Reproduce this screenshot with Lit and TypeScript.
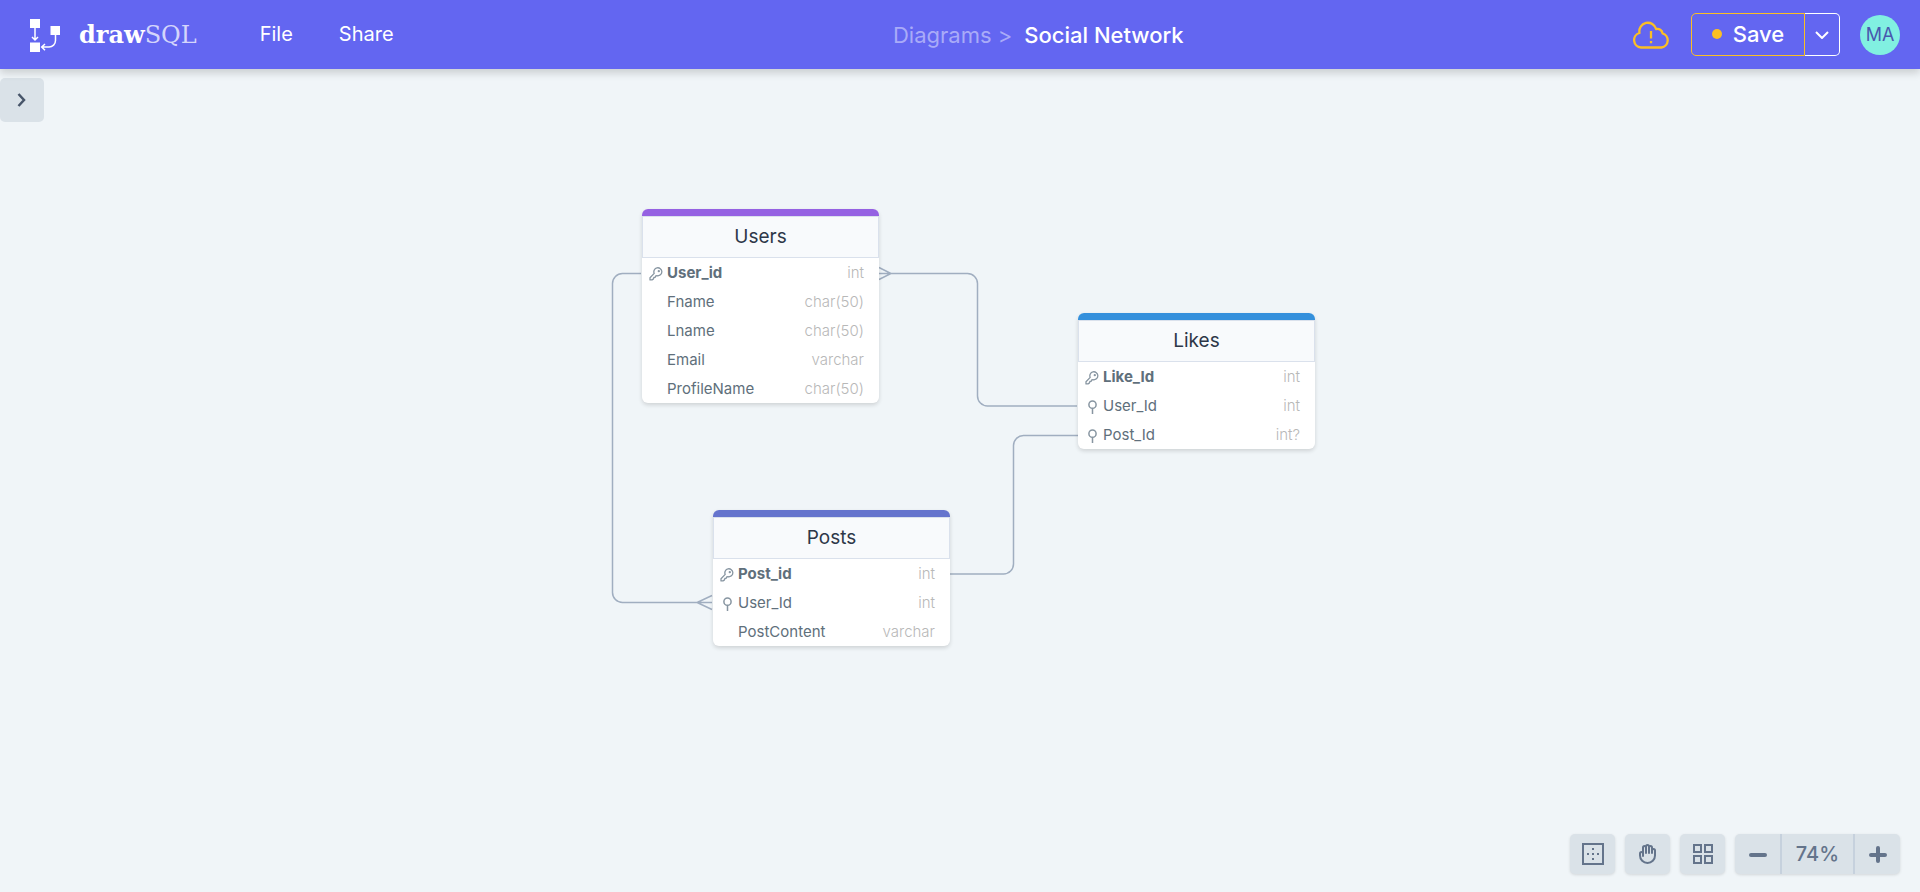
import { LitElement, html, svg, css, nothing } from "lit";
import { customElement, property } from "lit/decorators.js";

type KeyKind = "primary" | "index" | "none";

interface Field {
  name: string;
  type: string;
  key: KeyKind;
}

interface Entity {
  id: string;
  title: string;
  color: string;
  x: number;
  y: number;
  fields: Field[];
}

const ENTITIES: Entity[] = [
  {
    id: "users",
    title: "Users",
    color: "#9561e2",
    x: 642,
    y: 140,
    fields: [
      { name: "User_id", type: "int", key: "primary" },
      { name: "Fname", type: "char(50)", key: "none" },
      { name: "Lname", type: "char(50)", key: "none" },
      { name: "Email", type: "varchar", key: "none" },
      { name: "ProfileName", type: "char(50)", key: "none" },
    ],
  },
  {
    id: "likes",
    title: "Likes",
    color: "#3490dc",
    x: 1078,
    y: 244,
    fields: [
      { name: "Like_Id", type: "int", key: "primary" },
      { name: "User_Id", type: "int", key: "index" },
      { name: "Post_Id", type: "int?", key: "index" },
    ],
  },
  {
    id: "posts",
    title: "Posts",
    color: "#6574cd",
    x: 713,
    y: 441,
    fields: [
      { name: "Post_id", type: "int", key: "primary" },
      { name: "User_Id", type: "int", key: "index" },
      { name: "PostContent", type: "varchar", key: "none" },
    ],
  },
];

// Relationship lines in canvas coordinates, with crow's feet on the "many" ends.
const LINKS: string[] = [
  "M641 204.5H622.5a10 10 0 0 0-10 10V523.5a10 10 0 0 0 10 10H712M712 526.500L697 533.500L712 540.500",
  "M879 204.5H967.500a10 10 0 0 1 10 10V327a10 10 0 0 0 10 10H1077M879 198.500L891 204.500L879 210.500",
  "M950 505H1003.500a10 10 0 0 0 10-10V376.500a10 10 0 0 1 10-10H1078",
];

const primaryIcon = svg`
  <svg width="14" height="14" viewBox="0 0 14 14" fill="none" stroke="#8795a1" stroke-width="1.300" stroke-linejoin="round">
    <path d="M5.200 6.400A4 4 0 1 1 8.100 8.700L6.700 8.900L6.300 10.200L4.900 10.500L4.500 11.900L3 12.900H1V10.700Z"/>
    <circle cx="9.800" cy="4.200" r=".500" fill="#8795a1"/>
  </svg>`;

const indexIcon = svg`
  <svg width="14" height="14" viewBox="0 0 14 14" fill="none" stroke="#8795a1" stroke-width="1.500">
    <circle cx="7.500" cy="4.700" r="3.600"/>
    <path d="M7.500 8.300V14"/>
  </svg>`;

@customElement("entity-card")
export class EntityCard extends LitElement {
  @property({ attribute: false }) entity!: Entity;

  static styles = css`
    :host {
      display: block;
      width: 237px;
    }
    .card {
      border-radius: 6px;
      background: #fff;
      overflow: hidden;
      box-shadow: 0 2px 4px rgba(0, 0, 0, 0.14);
    }
    .band {
      height: 7px;
    }
    .title {
      margin: 0;
      border: 1px solid #dae1ec;
      background: #f8fafc;
      color: #2d3748;
      font-size: 19px;
      font-weight: 400;
      line-height: 40px;
      text-align: center;
    }
    .fields {
      width: 100%;
      border-collapse: collapse;
      font-size: 15px;
      line-height: 29px;
    }
    .fields td,
    .fields th {
      height: 29px;
      padding: 0;
    }
    .mark {
      width: 25px;
    }
    .mark svg {
      display: block;
      margin: 3px 0 0 7px;
    }
    .name {
      color: #606f7b;
      font-weight: 400;
      text-align: left;
    }
    .primary {
      font-weight: 700;
    }
    .fields .type {
      padding-right: 15px;
      color: #b8b8b8;
      font-weight: 300;
      text-align: right;
    }
  `;

  render() {
    const e = this.entity;
    return html`
      <section class="card" aria-labelledby="title">
        <div class="band" style="background:${e.color}"></div>
        <h2 class="title" id="title">${e.title}</h2>
        <table class="fields" aria-labelledby="title">
          <tbody>
            ${e.fields.map(
              (f) => html`
                <tr>
                  <td class="mark">
                    ${f.key === "primary" ? primaryIcon : f.key === "index" ? indexIcon : nothing}
                  </td>
                  <th scope="row" class="name ${f.key === "primary" ? "primary" : ""}">${f.name}</th>
                  <td class="type">${f.type}</td>
                </tr>
              `
            )}
          </tbody>
        </table>
      </section>
    `;
  }
}

@customElement("app-root")
export class AppRoot extends LitElement {
  static styles = css`
    :host {
      display: flex;
      flex-direction: column;
      min-height: 100vh;
      background: #f0f5f8;
      font-family: Inter, "Liberation Sans", sans-serif;
    }
    button {
      font: inherit;
      margin: 0;
      padding: 0;
      border: 0;
      background: none;
      display: flex;
      align-items: center;
      justify-content: center;
      cursor: pointer;
    }
    a {
      color: inherit;
      text-decoration: none;
    }
    .header {
      position: relative;
      z-index: 1;
      display: flex;
      align-items: center;
      height: 69px;
      padding: 0 20px 0 29px;
      background: #6366f1;
      color: #fff;
      box-shadow: 0 4px 8px rgba(0, 0, 0, 0.16);
    }
    .logo {
      display: flex;
      align-items: center;
      gap: 17px;
      font-family: "DejaVu Serif", serif;
      font-size: 24px;
      line-height: 32px;
    }
    .brand {
      font-weight: 700;
    }
    .brand-light {
      font-weight: 400;
      color: #d4d5fb;
    }
    .menu {
      display: flex;
      gap: 46px;
      margin: 0 50px 0 63px;
      padding-bottom: 2px;
      font-size: 20px;
    }
    .menu button {
      color: #fff;
    }
    .crumbs {
      flex: 1;
      display: flex;
      justify-content: center;
      gap: 12px;
      font-size: 22px;
      line-height: 32px;
      white-space: nowrap;
    }
    .parent {
      color: #a9abf8;
    }
    .current {
      font-weight: 500;
    }
    .actions {
      display: flex;
      align-items: center;
    }
    .cloud {
      margin-right: 22px;
    }
    .save {
      width: 114px;
      height: 43px;
      padding-bottom: 2px;
      gap: 11px;
      border: 1px solid #fbbf24;
      border-radius: 5px 0 0 5px;
      color: #fff;
      font-size: 22px;
      font-weight: 500;
    }
    .dot {
      width: 10px;
      height: 10px;
      border-radius: 50%;
      background: #fbbf24;
    }
    .more {
      width: 35px;
      height: 43px;
      border: 1px solid #fff;
      border-left: 0;
      border-radius: 0 5px 5px 0;
    }
    .avatar {
      width: 40px;
      height: 40px;
      margin-left: 20px;
      border-radius: 50%;
      background: #81f0e1;
      color: #4858ae;
      font-size: 18px;
    }
    .canvas {
      position: relative;
      flex: 1;
      overflow: hidden;
    }
    .links {
      position: absolute;
      inset: 0;
      width: 100%;
      height: 100%;
    }
    .node {
      position: absolute;
    }
    .expand {
      position: absolute;
      top: 9px;
      left: 0;
      width: 44px;
      height: 44px;
      border-radius: 5px;
      background: #dae2e8;
    }
    .tools {
      position: absolute;
      right: 20px;
      bottom: 18px;
      display: flex;
      gap: 10px;
    }
    .tool {
      width: 45px;
      height: 40px;
      border-radius: 5px;
      background: #dae2e8;
      box-shadow: 0 1px 3px rgba(0, 0, 0, 0.12);
    }
    .zoom {
      display: flex;
      border-radius: 5px;
      background: #dae2e8;
      box-shadow: 0 1px 3px rgba(0, 0, 0, 0.12);
    }
    .zoom button {
      width: 45px;
      height: 40px;
    }
    .zoom .level {
      width: 75px;
      border: solid #c6d1dd;
      border-width: 0 2px;
      color: #64748b;
      font-size: 20px;
      font-weight: 500;
    }
  `;

  private renderHeader() {
    return html`
      <header class="header">
        <a class="logo" href="#" aria-label="drawSQL">
          <svg width="33" height="36" viewBox="0 0 33 36" fill="none" stroke="#fff" stroke-width="1.500">
            <path d="M1 2h10v9H1zM21.500 9h9.500v9h-9.500zM1 25.500h10v9.500H1z" fill="#fff" stroke="none"/>
            <path d="M6 11v12M3 20l3 3l3-3M26.500 18v5.500a6.500 6.500 0 0 1-6.500 6.500H13M16 27l-3.300 3l3.300 3.200"/>
          </svg>
          <span><span class="brand">draw</span><span class="brand-light">SQL</span></span>
        </a>
        <nav class="menu" aria-label="Main">
          <button type="button">File</button>
          <button type="button">Share</button>
        </nav>
        <nav class="crumbs" aria-label="Breadcrumb">
          <span class="parent"><a href="#">Diagrams</a> &gt;</span>
          <a class="current" href="#" aria-current="page">Social Network</a>
        </nav>
        <div class="actions">
          <button type="button" class="cloud" aria-label="Unsaved changes">
            <svg width="36" height="28" viewBox="0 0 36 28" fill="none" stroke="#fbbf24" stroke-width="2.300" stroke-linejoin="round">
              <path d="M8 26.500A7.400 7.400 0 0 1 6.500 12A8.580 8.580 0 0 1 23.200 8.100A5 5 0 0 1 29.500 12.300A7.300 7.300 0 0 1 28.500 26.500Z"/>
              <path d="M18 10v7.500M18 20v2.300"/>
            </svg>
          </button>
          <button type="button" class="save"><span class="dot"></span>Save</button>
          <button type="button" class="more" aria-label="Save options">
            <svg width="14" height="8" viewBox="0 0 14 8" fill="none" stroke="#fff" stroke-width="2">
              <path d="M1 1l6 6l6-6"/>
            </svg>
          </button>
          <button type="button" class="avatar">MA</button>
        </div>
      </header>
    `;
  }

  private renderTools() {
    return html`
      <div class="tools">
        <button type="button" class="tool" aria-label="Fit to screen">
          <svg width="22" height="22" viewBox="0 0 22 22" fill="none" stroke="#64748b" stroke-width="2">
            <path d="M1 1h20v20H1z"/>
            <path d="M5 10h2v2H5zM10 10h2v2h-2zM15 10h2v2h-2zM10 5h2v2h-2zM10 15h2v2h-2z" fill="#64748b" stroke="none"/>
          </svg>
        </button>
        <button type="button" class="tool" aria-label="Pan">
          <svg width="24" height="24" viewBox="0 0 24 24" fill="none" stroke="#64748b" stroke-width="2" stroke-linecap="round" stroke-linejoin="round">
            <path d="M7 11.500V14m0-2.500v-6a1.500 1.500 0 113 0m-3 6a1.500 1.500 0 00-3 0v2a7.500 7.500 0 0015 0v-5a1.500 1.500 0 00-3 0m-6-3V11m0-5.500v-1a1.500 1.500 0 013 0v1m0 0V11m0-5.500a1.500 1.500 0 013 0v3m0 0V11"/>
          </svg>
        </button>
        <button type="button" class="tool" aria-label="Arrange tables">
          <svg width="20" height="20" viewBox="0 0 20 20" fill="none" stroke="#64748b" stroke-width="2">
            <path d="M1 1h7v7H1zM12 1h7v7h-7zM1 12h7v7H1zM12 12h7v7h-7z"/>
          </svg>
        </button>
        <div class="zoom" role="group" aria-label="Zoom">
          <button type="button" aria-label="Zoom out">
            <svg width="18" height="18" viewBox="0 0 18 18" stroke="#64748b" stroke-width="4" stroke-linecap="round">
              <path d="M2 10h14"/>
            </svg>
          </button>
          <button type="button" class="level">74%</button>
          <button type="button" aria-label="Zoom in">
            <svg width="18" height="18" viewBox="0 0 18 18" stroke="#64748b" stroke-width="4" stroke-linecap="round">
              <path d="M2 10h14M9 3v13"/>
            </svg>
          </button>
        </div>
      </div>
    `;
  }

  render() {
    return html`
      ${this.renderHeader()}
      <main class="canvas">
        <svg class="links" fill="none" stroke="#a0aec0" stroke-width="1.500" aria-hidden="true">
          ${LINKS.map((d) => svg`<path d=${d}></path>`)}
        </svg>
        ${ENTITIES.map(
          (e) => html`
            <entity-card class="node" style="left:${e.x}px;top:${e.y}px" .entity=${e}></entity-card>
          `
        )}
        <button type="button" class="expand" aria-label="Open sidebar">
          <svg width="10" height="14" viewBox="0 0 10 14" fill="none" stroke="#475569" stroke-width="2.500">
            <path d="M1.500 1l5.500 6l-5.500 6"/>
          </svg>
        </button>
        ${this.renderTools()}
      </main>
    `;
  }
}
